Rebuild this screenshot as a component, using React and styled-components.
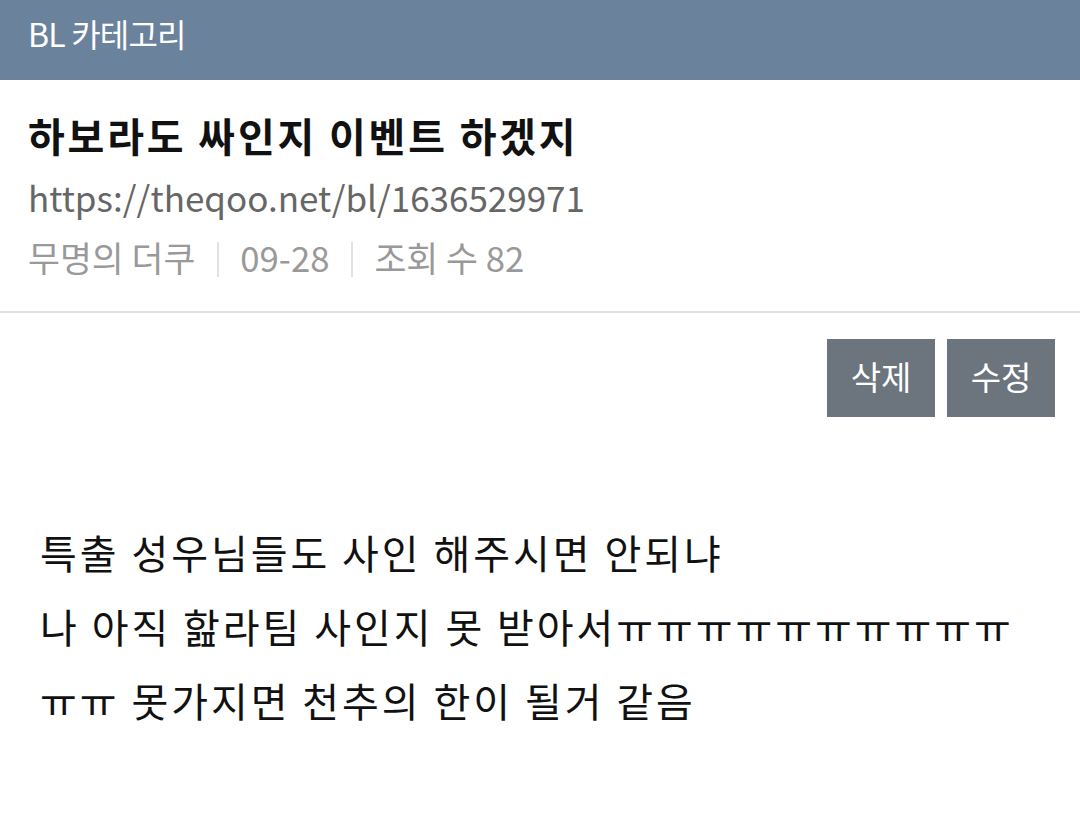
import styled, { createGlobalStyle } from "styled-components";

const GlobalStyle = createGlobalStyle`
  html, body {
    margin: 0;
    padding: 0;
    background: #fff;
  }
  body {
    font-family: "Noto Sans CJK KR", "Noto Sans", sans-serif;
  }
`;

const meta = ["무명의 더쿠", "09-28", "조회 수 82"];

const lines = [
  "특출 성우님들도 사인 해주시면 안되냐",
  "나 아직 핦라팀 사인지 못 받아서ㅠㅠㅠㅠㅠㅠㅠㅠㅠㅠ",
  "ㅠㅠ 못가지면 천추의 한이 될거 같음",
];

const App = () => {
  return (
    <>
      <GlobalStyle />
      <Page>
        <TopBar>BL 카테고리</TopBar>
        <PostHead>
          <Title>하보라도 싸인지 이벤트 하겠지</Title>
          <Link>https://theqoo.net/bl/1636529971</Link>
          <Meta>
            {meta.map((m, i) => (
              <MetaItem key={i} $first={i === 0}>
                {m}
              </MetaItem>
            ))}
          </Meta>
        </PostHead>
        <Actions>
          <ActionButton>삭제</ActionButton>
          <ActionButton>수정</ActionButton>
        </Actions>
        <Body>
          {lines.map((l, i) => (
            <p key={i}>{l}</p>
          ))}
        </Body>
      </Page>
    </>
  );
};

export default App;

const Page = styled.div`
  width: 1080px;
  min-height: 817px;
  background: #fff;
`;

const TopBar = styled.div`
  height: 80px;
  background: #6b829d;
  color: #fff;
  font-size: 32px;
  letter-spacing: -0.8px;
  display: flex;
  align-items: center;
  padding: 0 28px 14px;
  box-sizing: border-box;
`;

const PostHead = styled.div`
  padding: 27px 28px 29px;
  border-bottom: 2px solid #dedede;
`;

const Title = styled.h1`
  margin: 0;
  font-size: 40px;
  font-weight: 700;
  color: #111;
  line-height: 56px;
  letter-spacing: 2.8px;
`;

const Link = styled.div`
  font-size: 35px;
  color: #666;
  line-height: 50px;
  margin-top: 9px;
`;

const Meta = styled.div`
  display: flex;
  align-items: center;
  font-size: 34.7px;
  color: #999;
  line-height: 50px;
  margin-top: 10px;
`;

const MetaItem = styled.span`
  display: flex;
  align-items: center;

  ${(p) =>
    !p.$first &&
    `
    &::before {
      content: "";
      width: 2px;
      height: 35px;
      background: #e2e2e2;
      margin: 4px 21px 0 22px;
    }
  `}
`;

const Actions = styled.div`
  display: flex;
  justify-content: flex-end;
  gap: 12px;
  padding: 26px 25px 0;
`;

const ActionButton = styled.button`
  width: 108px;
  height: 78px;
  border: none;
  background: #6c747e;
  color: #fff;
  font-family: inherit;
  font-size: 33px;
  padding: 0 0 4px;
`;

const Body = styled.div`
  padding: 98px 40px 0;
  font-size: 40px;
  color: #111;
  letter-spacing: 2.95px;

  p {
    margin: 0;
    line-height: 74px;
    white-space: nowrap;
  }
`;
